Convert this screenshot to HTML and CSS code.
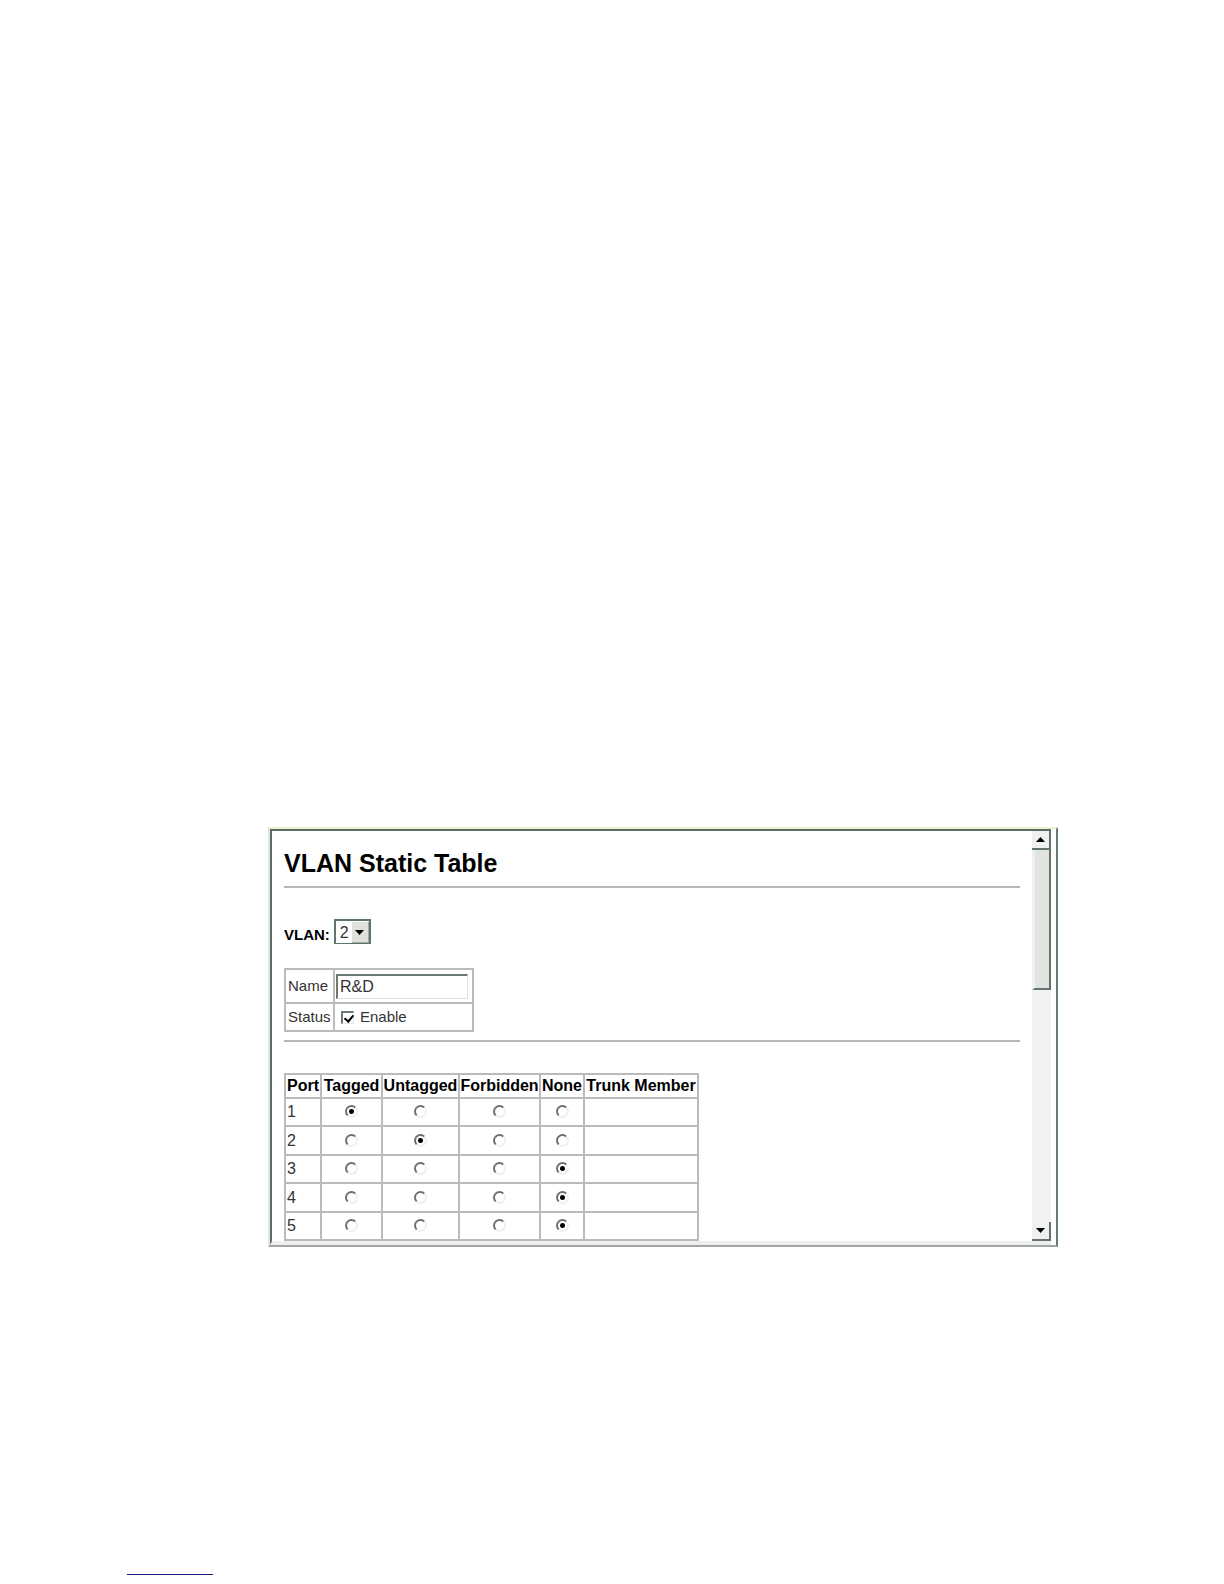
FILE: index.html
```html
<!DOCTYPE html>
<html lang="en">
<head>
    <meta charset="UTF-8">
    <meta name="viewport" content="width=device-width, initial-scale=1.0">
    <title>VLAN Static Table</title>
    <link rel="stylesheet" href="styles.css">
</head>
<body>
    <div class="window">
        <div class="pane">
            <form class="content">
                <h1>VLAN Static Table</h1>
                <hr>
                <div class="vlan">
                    <label for="vlan">VLAN:</label>
                    <span class="select">
                        <select id="vlan"><option>2</option></select>
                        <span class="drop"><svg width="9" height="5" viewBox="0 0 9 5"><path d="M0 0h9L4.5 5z"/></svg></span>
                    </span>
                </div>
                <table class="settings">
                    <tr>
                        <td class="key"><label for="name">Name</label></td>
                        <td><input type="text" id="name" value="R&amp;D"></td>
                    </tr>
                    <tr>
                        <td class="key">Status</td>
                        <td><div class="status"><input type="checkbox" id="enable" checked><label for="enable">Enable</label></div></td>
                    </tr>
                </table>
                <hr>
                <table class="ports">
                    <colgroup>
                        <col class="c-port"><col class="c-tagged"><col class="c-untagged"><col class="c-forbidden"><col class="c-none"><col class="c-trunk">
                    </colgroup>
                    <thead>
                        <tr><th>Port</th><th>Tagged</th><th>Untagged</th><th>Forbidden</th><th>None</th><th>Trunk Member</th></tr>
                    </thead>
                    <tbody>
                        <tr>
                            <td>1</td>
                            <td><input type="radio" name="port1" aria-label="Port 1 tagged" checked></td>
                            <td><input type="radio" name="port1" aria-label="Port 1 untagged"></td>
                            <td><input type="radio" name="port1" aria-label="Port 1 forbidden"></td>
                            <td><input type="radio" name="port1" aria-label="Port 1 none"></td>
                            <td></td>
                        </tr>
                        <tr>
                            <td>2</td>
                            <td><input type="radio" name="port2" aria-label="Port 2 tagged"></td>
                            <td><input type="radio" name="port2" aria-label="Port 2 untagged" checked></td>
                            <td><input type="radio" name="port2" aria-label="Port 2 forbidden"></td>
                            <td><input type="radio" name="port2" aria-label="Port 2 none"></td>
                            <td></td>
                        </tr>
                        <tr>
                            <td>3</td>
                            <td><input type="radio" name="port3" aria-label="Port 3 tagged"></td>
                            <td><input type="radio" name="port3" aria-label="Port 3 untagged"></td>
                            <td><input type="radio" name="port3" aria-label="Port 3 forbidden"></td>
                            <td><input type="radio" name="port3" aria-label="Port 3 none" checked></td>
                            <td></td>
                        </tr>
                        <tr>
                            <td>4</td>
                            <td><input type="radio" name="port4" aria-label="Port 4 tagged"></td>
                            <td><input type="radio" name="port4" aria-label="Port 4 untagged"></td>
                            <td><input type="radio" name="port4" aria-label="Port 4 forbidden"></td>
                            <td><input type="radio" name="port4" aria-label="Port 4 none" checked></td>
                            <td></td>
                        </tr>
                        <tr>
                            <td>5</td>
                            <td><input type="radio" name="port5" aria-label="Port 5 tagged"></td>
                            <td><input type="radio" name="port5" aria-label="Port 5 untagged"></td>
                            <td><input type="radio" name="port5" aria-label="Port 5 forbidden"></td>
                            <td><input type="radio" name="port5" aria-label="Port 5 none" checked></td>
                            <td></td>
                        </tr>
                    </tbody>
                </table>
            </form>
            <div class="scrollbar">
                <button type="button" class="up" aria-label="Scroll up"><svg width="9" height="5" viewBox="0 0 9 5"><path d="M0 5h9L4.5 0z"/></svg></button>
                <div class="thumb"></div>
                <button type="button" class="down" aria-label="Scroll down"><svg width="9" height="5" viewBox="0 0 9 5"><path d="M0 0h9L4.5 5z"/></svg></button>
            </div>
        </div>
    </div>
    <hr class="footer-line">
</body>
</html>
```
FILE: styles.css
```css
* { box-sizing: border-box; }
body { margin: 0; padding-top: 827px; background: white; color: #333; font: 15px/18px Arial, "Liberation Sans", sans-serif; }
.window { margin: 0 166px 0 268px; border-top: 2px solid #eaf4c8; border-right: 2px solid #687a74; border-bottom: 2px solid #a0a5a2; border-left: 2px solid #e0e5e2; }
.pane { display: flex; margin-right: 5px; border-top: 2px solid #5c6c66; border-left: 2px solid #5c6c66; border-bottom: 4px solid #edefed; }
.content { flex: 1; padding: 19px 12px 0 12px; }
h1 { margin: 0 0 9px; font-size: 25px; line-height: 27px; color: #000; }
hr { height: 2px; margin: 0; border: 0; background: #b8b8b8; }

.vlan { display: flex; align-items: center; gap: 4px; margin: 31px 0 24px; font-weight: bold; color: #000; }
.vlan label { padding-top: 6px; }
.select { display: flex; width: 37px; height: 25px; border: 2px solid #60736a; border-bottom-width: 1px; position: relative; }
select { appearance: none; width: 100%; padding: 0 0 0 4px; border: 0; border-radius: 0; background: white; color: #333; font: 16px Arial, "Liberation Sans", sans-serif; }
.drop { position: absolute; top: 1px; right: 0; bottom: 0; width: 17px; display: flex; align-items: center; justify-content: center; background: #dfe1dd; border-right: 1px solid #a5ada8; border-bottom: 1px solid #a5ada8; pointer-events: none; }

table { border-collapse: collapse; }
th, td { padding: 0; border: 2px solid #bbb; }
.settings { width: 190px; margin-bottom: 8px; }
.settings tr:first-child { height: 34px; }
.settings tr { height: 28px; }
.key { width: 49px; padding: 0 2px; }
input[type="text"] { display: block; width: 132px; height: 25px; margin-left: 1px; padding: 0 2px; border: 1px solid #e2e6e3; border-top: 2px solid #6c7a74; border-left: 2px solid #6c7a74; color: #333; font: 16px Arial, "Liberation Sans", sans-serif; }
.status { display: flex; align-items: center; gap: 6px; padding-left: 6px; }
input[type="checkbox"] { appearance: none; width: 13px; height: 13px; margin: 0; border: 1px solid #e2e6e3; border-top: 2px solid #6c7a74; border-left: 2px solid #6c7a74; position: relative; }
input[type="checkbox"]:checked::after { content: ""; position: absolute; left: 3px; top: 0; width: 4px; height: 7px; border: solid #000; border-width: 0 2px 2px 0; transform: rotate(40deg); }

.ports { table-layout: fixed; width: 415px; margin-top: 31px; }
.ports th { height: 24px; font-size: 16px; color: #000; white-space: nowrap; }
.ports td { height: 28px; font-size: 16px; text-align: center; }
.ports tr:nth-child(even) td { height: 29px; }
.ports td:first-child { padding-left: 1px; text-align: left; }
.c-port { width: 36px; }
.c-tagged { width: 61px; }
.c-untagged { width: 77px; }
.c-forbidden { width: 81px; }
.c-none { width: 44px; }
.c-trunk { width: 114px; }
input[type="radio"] { appearance: none; display: block; width: 13px; height: 13px; margin: 0 auto 1px; border: 2px solid #66736d; border-right-color: #eef0ee; border-bottom-color: #eef0ee; border-radius: 50%; }
input[type="radio"]:checked { background: radial-gradient(circle, #000 2px, transparent 3px); }

.scrollbar { display: flex; flex-direction: column; width: 19px; background: #f1f3f0; }
.scrollbar button { display: flex; align-items: center; justify-content: center; height: 19px; padding: 0; border: 0; border-right: 2px solid #61756c; border-bottom: 2px solid #61756c; background: #f0f1ee; }
.thumb { height: 140px; border-left: 3px solid #f0f1ee; border-right: 2px solid #61756c; border-bottom: 2px solid #61756c; background: #e1e3df; }
.scrollbar .down { margin-top: auto; }

.footer-line { width: 86px; margin: 327px 0 0 127px; height: 1px; background: #1a1a80; }
```
